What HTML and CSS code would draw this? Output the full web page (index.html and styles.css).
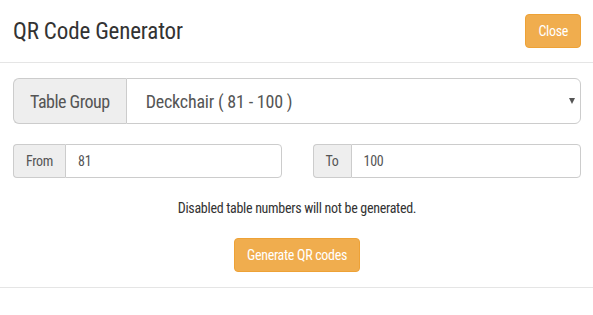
FILE: index.html
```html
<!DOCTYPE html>
<html lang="en">
<head>
  <meta charset="UTF-8" />
  <meta name="viewport" content="width=device-width, initial-scale=1.0"/>
  <title>QR Code Generator</title>
  <link rel="stylesheet" href="styles.css">
</head>
<body>
  <div class="modal">
    <div class="modal-header">
      <h4 class="modal-title">QR Code Generator</h4>
      <button class="btn btn-warning">Close</button>
    </div>

    <div class="modal-body">
      <div class="input-group input-group-lg">
        <span class="addon">Table Group</span>
        <div class="select-wrap">
          <select class="field">
            <option>Deckchair ( 81 - 100 )</option>
          </select>
        </div>
      </div>

      <div class="range-row">
        <div class="input-group">
          <span class="addon">From</span>
          <input class="field" type="number" value="81" />
        </div>
        <div class="input-group">
          <span class="addon">To</span>
          <input class="field" type="number" value="100" />
        </div>
      </div>

      <p class="note">Disabled table numbers will not be generated.</p>

      <div class="actions">
        <button class="btn btn-warning">Generate QR codes</button>
      </div>
    </div>

    <div class="modal-footer"></div>
  </div>
</body>
</html>
```

FILE: styles.css
```css
body {
  margin: 0;
  background: #fff;
  font-family: "Liberation Sans Narrow", "Roboto Condensed", "DejaVu Sans Condensed", sans-serif;
  color: #333;
  letter-spacing: -0.3px;
}

.modal-header {
  display: flex;
  justify-content: space-between;
  align-items: center;
  height: 62px;
  padding: 0 12px 0 13px;
  border-bottom: 1px solid #e5e5e5;
}

.modal-title {
  margin: 0;
  font-size: 23px;
  font-weight: normal;
  letter-spacing: -0.15px;
  color: #333;
}

.btn {
  font-family: inherit;
  font-size: 14px;
  letter-spacing: inherit;
  height: 34px;
  padding: 0 12px;
  border-radius: 4px;
  border: 1px solid #eea236;
  cursor: pointer;
}

.btn-warning {
  background: #f0ad4e;
  color: #fff;
}

.modal-body {
  padding: 15px 12px 15px 13px;
}

.input-group {
  display: flex;
  height: 34px;
  font-size: 14px;
}

.addon {
  display: flex;
  align-items: center;
  padding: 0 12px;
  background: #eee;
  border: 1px solid #ccc;
  border-right: none;
  border-radius: 4px 0 0 4px;
  color: #555;
}

.field {
  flex: 1;
  min-width: 0;
  box-sizing: border-box;
  height: 100%;
  padding: 0 12px;
  border: 1px solid #ccc;
  border-radius: 0 4px 4px 0;
  background: #fff;
  color: #555;
  font-family: inherit;
  font-size: inherit;
  letter-spacing: inherit;
  -moz-appearance: textfield;
}

.field::-webkit-inner-spin-button,
.field::-webkit-outer-spin-button {
  -webkit-appearance: none;
  margin: 0;
}

.input-group-lg {
  height: 46px;
  font-size: 18px;
  letter-spacing: -0.5px;
  margin-bottom: 20px;
}

.input-group-lg .addon {
  padding: 0 16px;
  border-radius: 6px 0 0 6px;
}

.select-wrap {
  flex: 1;
  position: relative;
}

.select-wrap select {
  width: 100%;
  padding: 0 16px 0 19px;
  border-radius: 0 6px 6px 0;
  letter-spacing: -0.2px;
  appearance: none;
  -webkit-appearance: none;
}

.select-wrap::after {
  content: "";
  position: absolute;
  right: 6px;
  top: 20px;
  border-left: 3.5px solid transparent;
  border-right: 3.5px solid transparent;
  border-top: 6px solid #555;
}

.range-row {
  display: grid;
  grid-template-columns: 1fr 1fr;
  gap: 31px;
}

.note {
  margin: 20px 0;
  text-align: center;
  font-size: 14px;
  line-height: 20px;
}

.actions {
  display: flex;
  justify-content: center;
}

.modal-footer {
  border-top: 1px solid #e5e5e5;
}
```
